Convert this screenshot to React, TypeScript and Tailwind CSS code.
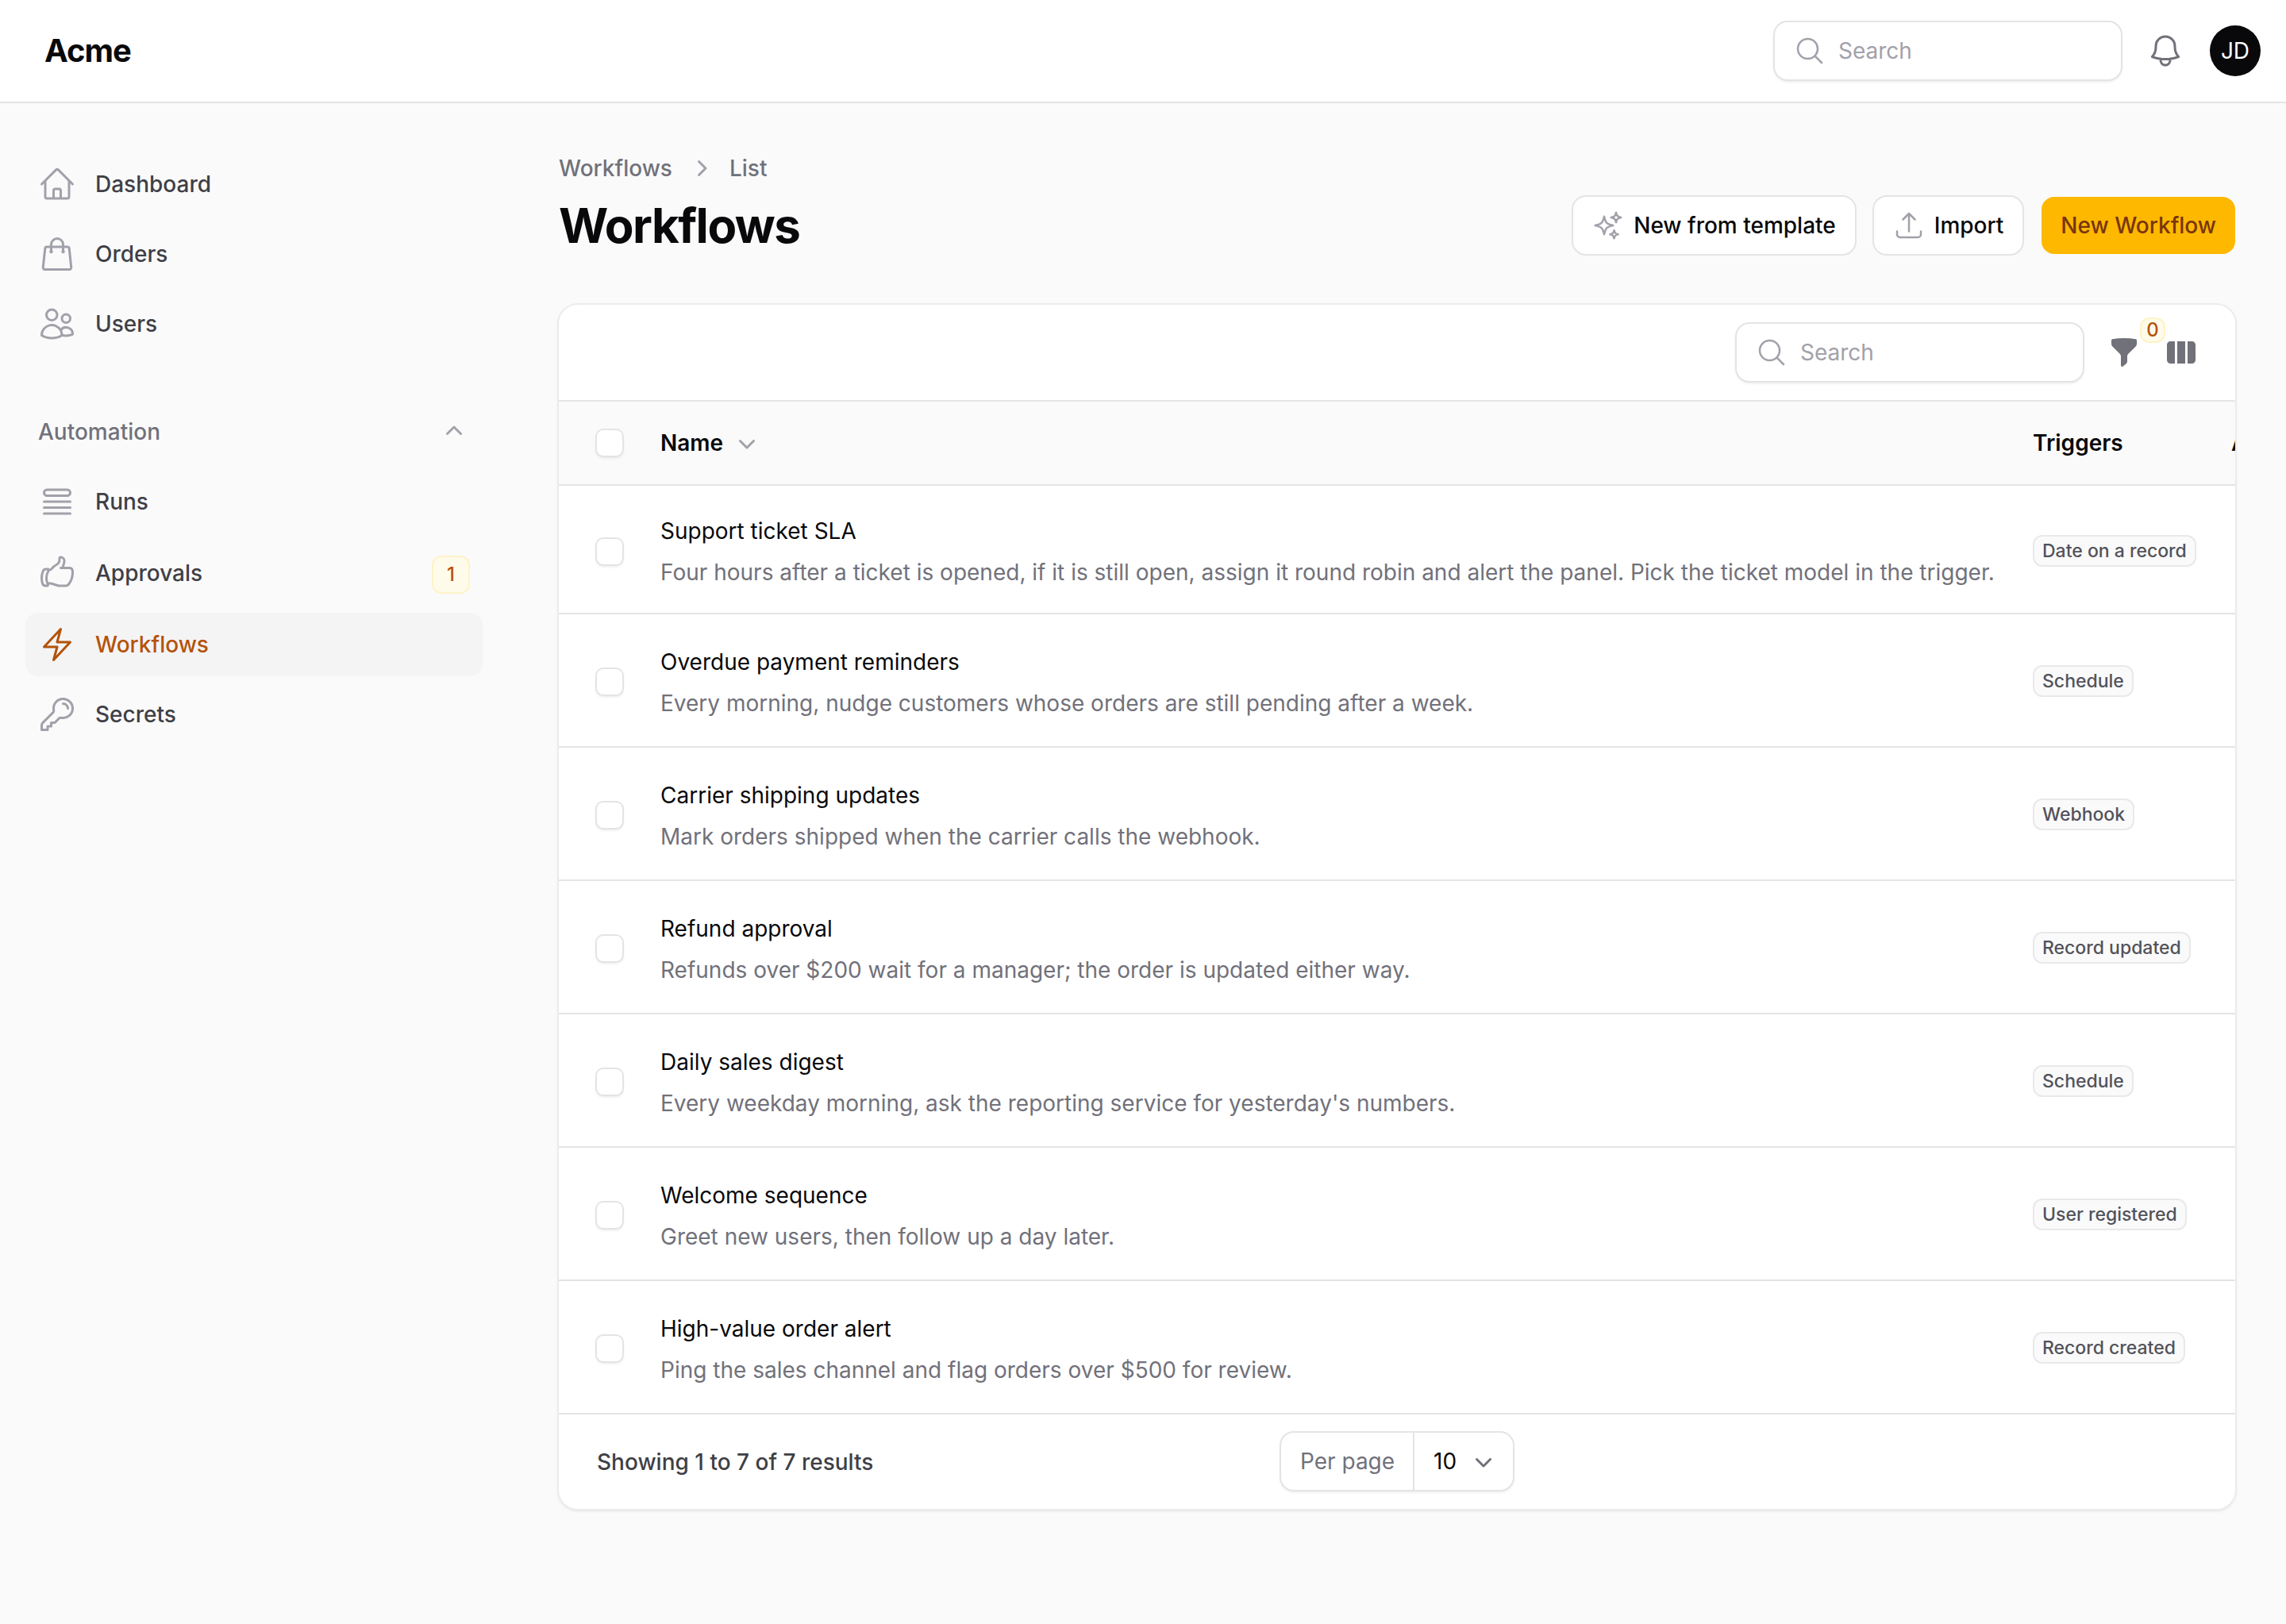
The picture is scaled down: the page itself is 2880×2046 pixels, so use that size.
import {
  HiOutlineArrowUpTray,
  HiOutlineBell,
  HiOutlineBolt,
  HiOutlineHandThumbUp,
  HiOutlineHome,
  HiOutlineKey,
  HiOutlineMagnifyingGlass,
  HiOutlineQueueList,
  HiOutlineShoppingBag,
  HiOutlineSparkles,
  HiOutlineUsers,
} from "react-icons/hi2";
import { HiMiniChevronDown, HiMiniChevronRight, HiMiniChevronUp, HiMiniFunnel, HiMiniViewColumns } from "react-icons/hi2";
import type { IconType } from "react-icons";

const rows = [
  {
    name: "Support ticket SLA",
    description:
      "Four hours after a ticket is opened, if it is still open, assign it round robin and alert the panel. Pick the ticket model in the trigger.",
    trigger: "Date on a record",
  },
  {
    name: "Overdue payment reminders",
    description: "Every morning, nudge customers whose orders are still pending after a week.",
    trigger: "Schedule",
  },
  {
    name: "Carrier shipping updates",
    description: "Mark orders shipped when the carrier calls the webhook.",
    trigger: "Webhook",
  },
  {
    name: "Refund approval",
    description: "Refunds over $200 wait for a manager; the order is updated either way.",
    trigger: "Record updated",
  },
  {
    name: "Daily sales digest",
    description: "Every weekday morning, ask the reporting service for yesterday's numbers.",
    trigger: "Schedule",
  },
  {
    name: "Welcome sequence",
    description: "Greet new users, then follow up a day later.",
    trigger: "User registered",
  },
  {
    name: "High-value order alert",
    description: "Ping the sales channel and flag orders over $500 for review.",
    trigger: "Record created",
  },
];

function NavItem({ icon: Icon, label, active, badge }: { icon: IconType; label: string; active?: boolean; badge?: string }) {
  return (
    <a
      className={`flex items-center gap-6 rounded-2xl px-4 ${badge ? "h-[84px]" : "h-20"} ${active ? "bg-[#f4f4f5]" : ""}`}
    >
      <Icon className={`size-12 shrink-0 ${active ? "text-[#b45309]" : "text-[#a1a1aa]"}`} />
      <span className={`flex-1 text-[28px] leading-10 font-medium ${active ? "text-[#b45309]" : "text-[#3f3f46]"}`}>
        {label}
      </span>
      {badge && (
        <span className="mt-1 flex h-12 w-12 items-center justify-center rounded-xl bg-[#fffbeb] text-[24px] leading-8 font-medium text-[#b45309] ring-2 ring-[#fef3c7] ring-inset">
          {badge}
        </span>
      )}
    </a>
  );
}

function SearchBox({ className }: { className: string }) {
  return (
    <div
      className={`flex h-[72px] items-center gap-4 rounded-2xl bg-white pl-6 shadow-[0_2px_4px_rgba(0,0,0,0.14)] ring-2 ring-[#e4e4e7] ${className}`}
    >
      <HiOutlineMagnifyingGlass className="size-10 text-[#a1a1aa]" />
      <span className="text-[28px] leading-10 text-[#a1a1aa]">Search</span>
    </div>
  );
}

function Checkbox() {
  return <div className="size-8 rounded-lg bg-white shadow-[0_2px_4px_rgba(0,0,0,0.14)] ring-2 ring-[#e4e4e7]" />;
}

export default function App() {
  return (
    <div className="min-h-[2046px] bg-[#fafafa] font-['Inter',sans-serif] antialiased">
      <header className="flex h-[130px] items-center border-b-2 border-[#e5e5e5] bg-white pr-8 pl-14">
        <div className="flex-1 text-[40px] leading-10 font-bold tracking-[-1px] text-[#09090b]">Acme</div>
        <SearchBox className="w-[436px]" />
        <HiOutlineBell className="ml-[32px] size-12 text-[#71717a]" />
        <div className="ml-[32px] flex size-16 items-center justify-center rounded-full bg-[#09090b] text-[28px] text-white">
          JD
        </div>
      </header>

      <div className="flex">
        <aside className="w-[640px] shrink-0 px-8 pt-[62px]">
          <nav className="flex w-[576px] flex-col gap-2">
            <NavItem icon={HiOutlineHome} label="Dashboard" />
            <NavItem icon={HiOutlineShoppingBag} label="Orders" />
            <NavItem icon={HiOutlineUsers} label="Users" />
            <div className="mt-[68px] mb-[20px] flex h-10 items-center justify-between pr-4 pl-4 text-[28px] font-medium text-[#71717a]">
              Automation
              <HiMiniChevronUp className="size-10 text-[#a1a1aa]" />
            </div>
            <NavItem icon={HiOutlineQueueList} label="Runs" />
            <NavItem icon={HiOutlineHandThumbUp} label="Approvals" badge="1" />
            <NavItem icon={HiOutlineBolt} label="Workflows" active />
            <NavItem icon={HiOutlineKey} label="Secrets" />
          </nav>
        </aside>

        <main className="w-[2176px] pt-[62px] pl-[64px]">
          <div className="flex items-center text-[28px] leading-10 font-medium text-[#71717a]">
            Workflows
            <HiMiniChevronRight className="mx-4 size-10 text-[#a1a1aa]" />
            List
          </div>
          <div className="mt-4 flex items-center justify-between">
            <h1 className="text-[60px] leading-[72px] font-bold tracking-[-1.5px] text-[#09090b]">Workflows</h1>
            <div className="flex items-center gap-6">
              <button className="flex h-[72px] items-center gap-3 rounded-2xl bg-white px-6 text-[28px] font-medium text-[#09090b] ring-2 ring-[#e4e4e7]">
                <HiOutlineSparkles className="size-10 text-[#a1a1aa]" />
                New from template
              </button>
              <button className="flex h-[72px] items-center gap-3 rounded-2xl bg-white px-6 text-[28px] font-medium text-[#09090b] ring-2 ring-[#e4e4e7]">
                <HiOutlineArrowUpTray className="size-10 text-[#a1a1aa]" />
                Import
              </button>
              <button className="flex h-[72px] items-center rounded-2xl bg-[#ffb800] px-6 text-[28px] font-medium text-[#78350f]">
                New Workflow
              </button>
            </div>
          </div>

          <section className="mt-[64px] overflow-hidden rounded-3xl bg-white shadow-[0_2px_4px_rgba(0,0,0,0.14)] ring-2 ring-[#ececee]">
            <div className="flex h-[122px] items-center border-b-2 border-[#e4e4e7] pr-[48px]">
              <div className="flex-1" />
              <SearchBox className="w-[436px]" />
              <div className="relative ml-[32px]">
                <HiMiniFunnel className="size-10 text-[#71717a]" />
                <span className="absolute -top-6 left-[40px] flex h-8 w-8 items-center justify-center rounded-xl bg-[#fffbeb] text-[24px] leading-8 font-medium text-[#b45309] ring-2 ring-[#fef3c7] ring-inset">
                  0
                </span>
              </div>
              <HiMiniViewColumns className="ml-[32px] size-10 text-[#71717a]" />
            </div>
            <table className="w-[2300px] table-fixed border-collapse">
              <thead>
                <tr className="h-[105px] border-b-2 border-[#e4e4e7] bg-[#fafafa] text-left text-[28px] font-semibold text-[#09090b]">
                  <th className="w-[128px] pl-[48px]">
                    <Checkbox />
                  </th>
                  <th className="w-[1729px] font-semibold">
                    <span className="flex items-center gap-[10px]">
                      Name <HiMiniChevronDown className="size-10 text-[#a1a1aa]" />
                    </span>
                  </th>
                  <th className="w-[250px] font-semibold">Triggers</th>
                  <th className="font-semibold">Active</th>
                </tr>
              </thead>
              <tbody>
                {rows.map((row, i) => (
                  <tr key={row.name} className={`border-b-2 border-[#e4e4e7] ${i === 0 ? "h-[162px]" : "h-[168px]"}`}>
                    <td className={`pl-[48px] ${i === 0 ? "pt-[6px]" : "pt-1"}`}>
                      <Checkbox />
                    </td>
                    <td className={i === 0 ? "pt-[6px]" : "pt-[6px]"}>
                      <div className="text-[28px] leading-10 text-[#09090b]">{row.name}</div>
                      <div className="mt-3 text-[28px] leading-10 whitespace-nowrap text-[#71717a]">{row.description}</div>
                    </td>
                    <td className={i === 0 ? "pt-1" : "pt-[2px]"}>
                      <span className="inline-flex h-10 items-center rounded-xl bg-[#fafafa] px-3 text-[23px] font-medium text-[#52525b] ring-2 ring-[#e9e9eb] ring-inset">
                        {row.trigger}
                      </span>
                    </td>
                    <td />
                  </tr>
                ))}
              </tbody>
            </table>
            <div className="relative flex h-[119px] items-center pl-[48px] text-[28px] font-medium text-[#3f3f46]">
              Showing 1 to 7 of 7 results
              <div className="absolute top-[23px] left-[910px] flex h-[72px] w-[292px] items-center rounded-2xl bg-white font-normal shadow-[0_2px_4px_rgba(0,0,0,0.14)] ring-2 ring-[#e4e4e7]">
                <span className="flex h-full w-[168px] items-center border-r-2 border-[#e4e4e7] pl-6 text-[#71717a]">Per page</span>
                <span className="pl-6 text-[#09090b]">10</span>
                <HiMiniChevronDown className="ml-[14px] size-10 text-[#71717a]" />
              </div>
            </div>
          </section>
        </main>
      </div>
    </div>
  );
}
